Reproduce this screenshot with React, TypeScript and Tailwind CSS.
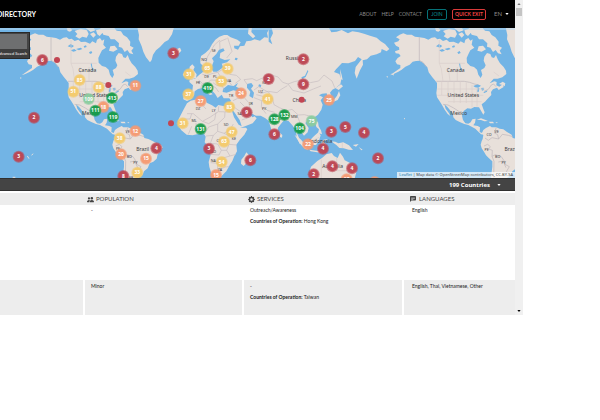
import React from "react";
import { BsChatLeftTextFill, BsGearFill, BsPeopleFill } from "react-icons/bs";

type Tone = "red" | "orange" | "yellow" | "green" | "mint";
type Marker = [x: number, y: number, label: string, tone: Tone];
type Label = [x: number, y: number, text: string];

const tones: Record<Tone, string> = {
  red: "fill-[#bd4552]",
  orange: "fill-[#f59a72]",
  yellow: "fill-[#f4ca6a]",
  green: "fill-[#159b48]",
  mint: "fill-[#8bcc9f]",
};

const markers: Marker[] = [
  [127, 180, "6", "red"], [520, 160, "3", "red"], [102, 353, "2", "red"], [56, 470, "3", "red"],
  [910, 178, "2", "red"], [806, 237, "2", "red"], [910, 253, "9", "red"], [740, 337, "9", "red"],
  [823, 403, "6", "red"], [994, 395, "3", "red"], [1036, 381, "5", "red"], [1092, 398, "4", "red"],
  [1134, 475, "2", "red"], [1056, 505, "4", "red"], [997, 499, "4", "red"], [941, 523, "2", "red"],
  [969, 446, "4", "red"], [751, 481, "6", "red"], [627, 446, "3", "red"], [469, 445, "4", "red"],
  [370, 528, "8", "red"],
  [406, 257, "11", "orange"], [310, 321, "18", "orange"], [406, 393, "12", "orange"],
  [363, 463, "20", "orange"], [438, 476, "15", "orange"], [723, 280, "24", "orange"],
  [602, 303, "27", "orange"], [987, 300, "25", "orange"], [924, 433, "22", "orange"],
  [648, 525, "15", "orange"], [1040, 538, "17", "orange"], [1124, 546, "10", "orange"],
  [239, 240, "85", "yellow"], [296, 262, "88", "yellow"], [220, 275, "51", "yellow"],
  [359, 415, "38", "yellow"], [412, 518, "33", "yellow"], [567, 223, "31", "yellow"],
  [565, 283, "37", "yellow"], [622, 204, "65", "yellow"], [683, 206, "39", "yellow"],
  [664, 244, "53", "yellow"], [688, 321, "83", "yellow"], [803, 297, "41", "yellow"],
  [548, 370, "31", "yellow"], [695, 396, "47", "yellow"], [672, 425, "63", "yellow"],
  [665, 486, "54", "yellow"],
  [266, 297, "109", "mint"], [935, 363, "75", "mint"], [336, 294, "413", "green"],
  [339, 351, "119", "green"], [286, 332, "111", "green"], [623, 264, "419", "green"],
  [602, 387, "131", "green"], [853, 345, "132", "green"], [823, 358, "128", "green"],
  [899, 385, "104", "green"],
];

const dots: [number, number][] = [[171, 180], [325, 255], [513, 370], [905, 299]];

const countryLabels: Label[] = [
  [262, 216, "Canada"], [285, 291, "United States"], [271, 346, "Mexico"], [428, 452, "Brazil"],
  [880, 179, "Russia"], [898, 306, "China"], [998, 504, "Australia"], [962, 429, "Indonesia"],
  [1367, 216, "Canada"], [1390, 291, "United States"], [1376, 346, "Mexico"], [1533, 452, "Brazil"],
];

const codeLabels: Label[] = [
  [612, 182, "NO"], [641, 157, "SE"], [620, 234, "DE"], [645, 234, "PL"], [594, 253, "FR"],
  [686, 247, "UA"], [693, 290, "TR"], [594, 331, "DZ"], [641, 335, "LY"], [582, 367, "ML"],
  [678, 379, "SD"], [753, 315, "IR"], [793, 331, "PK"], [782, 280, "UZ"], [793, 252, "KZ"],
  [640, 487, "NA"], [660, 512, "ZA"], [702, 419, "KE"], [883, 354, "MM"], [641, 459, "AO"],
  [657, 425, "CD"], [719, 344, "SA"], [388, 474, "BO"], [406, 493, "PY"], [383, 398, "VE"],
  [354, 450, "PE"], [393, 536, "AR"],
  [1467, 408, "CO"], [1490, 398, "VE"], [1460, 452, "PE"], [1493, 474, "BO"], [1511, 493, "PY"],
];

/* Outlines use map units; three units make one pixel at the usual width. */
function Americas() {
  return (
    <g>
      <g className="fill-[#e8e0da]">
        <path d="M77 128 90 124 94 118 83 112 94 104 105 100 116 104 130 104 140 110 153 112 168 114 180 119 190 113 200 112 207 118 215 116 224 123 235 119 243 126 256 125 270 131 277 124 288 130 291 119 300 114 306 122 313 118 310 134 318 143 306 151 300 163 295 174 296 188 306 198 317 201 326 209 330 224 337 234 342 224 338 210 348 204 352 196 346 182 348 170 356 159 366 162 370 172 377 174 383 165 388 178 395 190 406 201 413 212 414 222 402 232 388 236 376 236 364 250 378 244 385 246 384 256 393 260 403 253 406 261 391 270 386 263 374 268 368 276 369 285 358 296 350 305 340 313 345 327 349 337 345 344 338 332 332 322 318 321 308 326 297 325 286 333 281 347 284 360 291 370 300 371 307 367 312 358 322 356 320 368 315 376 328 378 335 382 334 396 341 399 350 397 357 399 347 404 338 403 330 395 321 386 310 380 300 375 288 372 274 366 262 360 255 352 254 344 247 333 238 322 228 313 232 326 242 340 246 348 238 342 229 329 221 315 214 304 206 292 204 279 206 263 206 249 199 240 192 232 181 217 177 202 166 190 154 182 143 183 133 185 124 194 111 200 100 209 90 215 76 222 65 226 83 213 96 204 96 195 86 193 81 184 88 174 97 168 92 161 82 160 80 154 93 149 92 142 83 137Z" />
        <path d="M341 399 345 390 353 384 365 378 370 382 384 382 394 386 405 388 416 396 430 404 433 414 445 417 456 422 469 429 483 434 488 442 483 452 473 463 470 476 460 485 449 490 443 505 432 514 428 524 413 536 368 536 370 516 372 500 372 484 362 475 353 466 347 455 340 445 337 434 340 423 343 417 345 405Z" />
        <path d="M412 82 417 105 416 118 425 139 430 155 438 172 450 187 455 180 459 164 468 151 480 141 494 126 505 120 516 103 522 82Z" />
        <path d="M200 85 209 83 217 90 210 95 203 93ZM224 93 242 86 261 91 266 102 260 113 247 110 238 116 226 109 232 102ZM256 83 280 83 286 91 272 96ZM270 102 281 97 288 105 280 113ZM288 91 302 86 309 97 299 108 292 103ZM300 83 342 83 350 92 363 94 370 105 381 112 391 125 390 137 401 143 394 152 400 163 389 160 382 150 374 156 366 143 356 140 357 130 344 118 332 118 326 108 310 104ZM331 139 344 137 353 148 340 155 327 152ZM392 252 403 245 411 250 409 259 402 255ZM325 359 338 355 350 359 359 363 348 364 338 360ZM361 365 374 365 377 370 365 370ZM381 367 388 367 386 370Z" />
      </g>
      <g className="fill-[#72b4e5]">
        <path d="M203 139 212 132 222 138 215 143ZM212 151 223 147 230 152 220 155ZM228 147 242 143 247 147 237 151ZM251 139 258 136 260 141 253 143ZM267 157 274 153 277 159 270 162ZM272 191 275 188 277 202 282 211 277 213ZM315 258 328 253 338 257 330 263 320 262ZM328 264 333 265 331 276 326 275ZM338 264 346 263 347 270 341 272ZM345 277 357 271 356 275 348 279Z" />
      </g>
      <path className="fill-none stroke-[#bdb5b9]" strokeWidth="2" d="M153 112V181L164 187 174 201M204 244H288L304 247 318 252 328 254M347 274 360 268 369 255 376 252 383 260M224 313 239 315 256 324 270 333 281 342M384 382 378 399 388 404 391 417M350 414 360 421 371 413 391 417 402 403 420 406 433 410M347 438 358 433 366 440 361 447 372 451 371 469 381 464 399 470 407 482 410 493 423 500 414 515 428 524M371 469 377 484 376 536M390 486 404 483 413 503" />
      <path className="fill-none stroke-[#dacfcc]" strokeWidth="2" d="M224 244 219 206 213 190 213 120M245 244 240 202M267 244V201M213 190H290M220 244V285M239 244V294M257 244V309M276 244V309M294 247V309M207 267H349M207 286H345M239 305H340M311 255V322M326 266V320M376 216 392 228" />
    </g>
  );
}

function OldWorld() {
  return (
    <g>
      <g className="fill-[#e8e0da]">
        <path d="M601 180 603 168 616 159 628 148 636 133 646 119 658 110 672 105 682 105 692 112 712 119 722 127 716 137 702 137 703 145 714 149 720 139 733 137 739 124 753 122 764 118 780 122 793 112 804 113 801 99 809 84 830 82 986 82 994 97 1010 95 1025 90 1044 100 1057 94 1076 97 1092 101 1110 107 1130 113 1142 124 1155 132 1168 147 1160 154 1145 147 1143 157 1130 163 1112 167 1101 178 1088 181 1089 194 1080 211 1070 236 1064 219 1067 201 1078 187 1085 178 1074 171 1065 183 1045 190 1026 189 1008 208 1002 216 1018 222 1024 238 1021 252 1007 264 997 269 990 278 997 294 991 300 983 292 980 280 966 281 957 286 969 292 962 301 968 314 964 329 954 344 940 355 924 360 916 369 926 384 923 397 912 407 902 394 895 387 892 402 901 423 907 433 899 431 890 410 887 389 877 376 865 362 852 361 842 373 834 383 832 400 825 407 817 398 812 382 806 362 795 354 782 347 768 347 751 341 743 331 735 326 744 347 760 345 770 355 758 370 735 379 714 386 706 374 698 354 688 333 687 310 693 302 688 295 671 295 665 284 653 294 645 281 637 273 627 260 614 254 625 271 638 283 630 285 617 276 607 264 594 267 584 274 582 286 574 297 561 303 550 298 551 280 555 272 577 272 579 256 568 246 569 239 585 236 598 224 612 214 617 203 607 196 601 190Z" />
        <path d="M561 310 572 302 595 297 615 294 620 308 636 316 647 323 655 315 673 319 685 319 691 333 699 352 710 369 721 383 738 383 742 388 733 404 719 420 709 434 711 454 703 468 697 483 688 497 679 514 661 532 641 536 634 520 628 501 626 486 632 464 627 442 614 427 617 410 611 400 597 401 578 406 560 404 544 391 534 375 536 357 545 340 552 326Z" />
        <path d="M746 82 756 82 754 96 766 109 759 115 744 101ZM569 200 577 193 584 201 580 210 590 223 588 234 571 239 562 233 573 227 568 215ZM553 215 563 211 565 224 555 230 548 225ZM506 153 518 144 531 147 540 143 544 152 534 163 519 168 510 163ZM739 457 747 466 742 486 731 498 723 491 724 479 733 468ZM1006 264 1023 253 1029 259 1016 270ZM1017 273 1021 286 1013 300 1001 305 990 313 986 306 1003 298 1011 287ZM1020 207 1025 225 1028 240 1022 237ZM840 399 847 405 846 413 840 411ZM884 405 902 418 919 438 924 449 914 446 899 430ZM926 425 940 410 955 397 962 406 957 422 948 435 931 435ZM968 420 983 417 973 425 980 440 973 435 969 444 964 431ZM928 449 950 452 972 456 961 458 932 454ZM945 364 954 365 956 379 963 391 966 403 954 399 957 388 949 381ZM993 424 1006 425 1015 430 1030 427 1047 436 1059 450 1046 449 1031 445 1018 444 1009 435ZM933 500 952 483 967 473 979 463 995 459 1002 468 1013 474 1020 458 1029 470 1034 481 1049 488 1061 502 1069 516 1064 536 932 536 937 523 929 514ZM1058 435 1076 432 1068 440ZM1076 441 1088 449 1084 451Z" />
      </g>
      <g className="fill-[#72b4e5]">
        <path d="M633 205 641 184 636 175 649 162 657 149 670 145 674 152 661 159 659 174 674 180 691 178 681 187 665 191 670 202 651 215 640 215ZM806 84 815 84 819 100 811 116 817 133 806 125ZM669 267 684 255 701 258 714 248 708 260 724 267 738 276 719 275 700 271 680 278 668 276ZM741 252 754 249 760 257 753 266 762 278 759 295 748 288 751 275 741 263ZM693 324 701 334 719 360 725 379 716 374 702 352ZM736 323 748 335 766 347 758 352 743 340ZM904 232 915 227 923 210 925 214 917 231 907 237ZM686 399 694 400 693 409 686 407ZM706 173 713 174 711 181 704 179ZM777 253 784 255 782 262 775 259Z" />
      </g>
      <path className="fill-none stroke-[#c6bdc0]" strokeWidth="2" d="M617 193 622 171 643 135 660 120M660 148 659 125 680 116M680 174 696 154 683 113M596 240 607 250 601 267M607 223 620 226 639 220 653 217 662 230 652 241 632 240 624 248 608 250M653 217 673 205 689 223 709 226 722 238 706 250M668 202 686 202 696 211M665 242 684 242 695 255M639 248 650 256 667 258 673 271M630 253 648 264 656 276M742 254 732 239 757 236 770 242 792 232 811 224 834 231 848 247 864 252 883 245 905 240 931 248 956 243 972 225 996 243 1004 263M864 252 878 271 912 279 940 267 963 258M781 281 805 274 831 278 842 269 862 257M762 270 776 260 793 270 809 279 797 291 769 284M699 302 713 295 733 293 746 308 750 325M720 306 733 319M762 293 785 302 784 322 798 341M785 302 802 301 817 294 822 314 838 323 861 332 876 328 895 345 913 344 936 350M861 332 865 349M893 350 900 369 914 374M824 337 801 331M703 322 717 332 738 342M725 360 753 350M561 341 580 341 607 364 631 351 655 335 656 319M656 335 691 336M604 299 608 316 618 327M544 357 570 357 575 341M575 379 565 403M588 369 588 399M608 364 626 371 644 359 648 337M614 401 626 381 653 372 674 352 675 336M653 372 653 394 672 400 690 389 700 372M618 408 640 406 653 394M640 406 631 430 653 432 664 451 680 451 687 433 710 435M629 463 657 465 664 451M680 451 690 468 708 463M632 488 654 490 665 475 690 468M654 490 652 513 675 501 687 500M672 400 690 409 709 396 706 386" />
      <path className="fill-none stroke-[#d6cbc9]" strokeWidth="2" d="M964 479V536M1010 474V512M1010 512H1060M994 502 964 502M1027 427V444M936 423 957 412" />
    </g>
  );
}

function WorldMap() {
  return (
    <svg
      viewBox="0 84 1545 450"
      preserveAspectRatio="xMaxYMin slice"
      className="block h-[150px] w-full bg-[#72b4e5] font-['Noto_Sans',sans-serif]"
      role="img"
      aria-label="World map of organizations"
    >
      <Americas />
      <OldWorld />
      <g transform="translate(1105 0)">
        <Americas />
      </g>
      <path d="M0 87H1545" className="stroke-[#b9d9f1]" strokeWidth="3" />
      <path d="M60 234h4M82 468l5 8M95 466l4-5M1175 222l7 3M1160 230l4 1M1212 355l3 2M38 532h8" className="stroke-[#e8e0da]" strokeWidth="3" />
      <g className="fill-[#3c3c42]" textAnchor="middle">
        {countryLabels.map(([x, y, text], i) => (
          <text key={i} x={x} y={y} fontSize={15}>{text}</text>
        ))}
        {codeLabels.map(([x, y, text], i) => (
          <text key={i} x={x} y={y} fontSize={11}>{text}</text>
        ))}
      </g>
      {dots.map(([x, y]) => (
        <circle key={x} cx={x} cy={y} r={9} className="fill-[#c24552]" />
      ))}
      {markers.map(([x, y, label, tone]) => (
        <g key={`${x}-${y}`} className={tones[tone]}>
          <circle cx={x} cy={y} r={18} className="opacity-60" />
          <circle cx={x} cy={y} r={15} className="opacity-90" />
          <text x={x} y={y + 5} fontSize={15} textAnchor="middle" className="fill-white font-bold">{label}</text>
        </g>
      ))}
    </svg>
  );
}

function Caret({ className }: { className: string }) {
  return (
    <svg viewBox="0 0 8 5" className={`pointer-events-none h-[2px] w-[4px] ${className}`} aria-hidden="true">
      <path d="M0 0H8L4 5Z" fill="currentColor" />
    </svg>
  );
}

function Header() {
  return (
    <header className="flex h-[28px] items-center justify-between overflow-hidden bg-black pr-[6px]">
      <a href="#home" className="-ml-[3px] text-[7px] leading-[8px] font-bold text-white">DIRECTORY</a>
      <nav className="flex items-center text-[5px] leading-[6px] text-[#8a8a8a]">
        <a href="#about" className="mr-[5px]">ABOUT</a>
        <a href="#help" className="mr-[5px]">HELP</a>
        <a href="#contact" className="mr-[5px]">CONTACT</a>
        <button className="mr-[5px] h-[11px] w-[20px] rounded-[2px] border border-[#067278] text-[#0a9096]">JOIN</button>
        <button className="mr-[8px] h-[11px] w-[34px] rounded-[2px] border border-[#d93a3a] font-bold whitespace-nowrap text-[#f04444]">QUICK EXIT</button>
        <label className="flex items-center">
          <select aria-label="Language" className="w-[11px] appearance-none text-[6px]">
            <option>EN</option>
          </select>
          <Caret className="text-white" />
        </label>
      </nav>
    </header>
  );
}

function SearchPanel() {
  return (
    <form className="absolute top-[4px] left-0 w-[30px] overflow-hidden border border-l-0 border-[#292929] bg-[#444] pt-px">
      <input aria-label="Search" className="block h-[15px] w-[27px] bg-[#6e6f70]" />
      <div className="flex h-[9px] items-center justify-end bg-[#3d3d3d] pr-[2px]">
        <a href="#advanced" className="text-[4px] leading-[5px] whitespace-nowrap text-white">Advanced Search</a>
      </div>
    </form>
  );
}

function Services({ kind, country }: { kind: string; country: string }) {
  return (
    <>
      <p>{kind}</p>
      <p className="mt-[5px]"><b className="font-bold">Countries of Operation:</b> {country}</p>
    </>
  );
}

function Listing() {
  const heading = "flex items-center gap-[2px] font-normal";
  return (
    <table className="mt-[2px] w-full table-fixed border-separate border-spacing-0 text-left text-[5px] leading-[6px] text-[#222]">
      <colgroup>
        <col className="w-[85px]" />
        <col className="w-[159px]" />
        <col className="w-[160px]" />
        <col />
      </colgroup>
      <thead className="bg-[#ededed] text-[6px] text-[#444]">
        <tr className="h-[12px]">
          <th aria-label="Organization" />
          <th className="p-0 pl-[2px]">
            <div className={heading}><BsPeopleFill className="size-[7px]" />POPULATION</div>
          </th>
          <th className="p-0 pl-[4px]">
            <div className={heading}><BsGearFill className="size-[7px]" />SERVICES</div>
          </th>
          <th className="p-0 pl-[6px]">
            <div className={heading}><BsChatLeftTextFill className="mr-px size-[6px]" />LANGUAGES</div>
          </th>
        </tr>
      </thead>
      <tbody className="align-top">
        <tr className="h-[75px]">
          <td />
          <td className="pt-[2px] pl-[6px]">-</td>
          <td className="pt-[2px] pl-[6px]"><Services kind="Outreach/Awareness" country="Hong Kong" /></td>
          <td className="pt-[2px] pl-[8px]">English</td>
        </tr>
        <tr className="h-[35px] bg-[#ededed]">
          <td className="border-r-2 border-white" />
          <td className="border-r-2 border-white pt-[3px] pl-[6px]">Minor</td>
          <td className="border-r-2 border-white pt-[3px] pl-[6px]"><Services kind="-" country="Taiwan" /></td>
          <td className="pt-[3px] pl-[8px]">English, Thai, Vietnamese, Other</td>
        </tr>
      </tbody>
    </table>
  );
}

function ScrollTrack() {
  return (
    <div className="flex w-[8px] shrink-0 flex-col items-center justify-between bg-[#f0f0f0] py-[3px] text-[#333]" aria-hidden="true">
      <div className="flex flex-col items-center gap-[3px]">
        <Caret className="rotate-180 text-[#777]" />
        <div className="h-[8px] w-[6px] bg-[#c4c4c4]" />
      </div>
      <Caret className="text-black" />
    </div>
  );
}

export default function App() {
  return (
    <div className="min-h-screen bg-white pr-[77px] font-[Lato,sans-serif]">
      <div className="flex">
        <div className="min-w-0 grow">
          <Header />
          <main>
            <section className="relative">
              <WorldMap />
              <SearchPanel />
              <p className="absolute right-0 bottom-0 bg-white/70 px-[2px] font-['Noto_Sans',sans-serif] text-[4px] leading-[6px] whitespace-nowrap text-[#444]">
                <a href="#leaflet" className="text-[#2878a8]">Leaflet</a> | Map data © <a href="#osm">OpenStreetMap</a> contributors, <a href="#license">CC-BY-SA</a>
              </p>
            </section>
            <div className="flex h-[13px] items-center justify-end border-y border-[#303030] bg-[#444] pr-[14px] text-white">
              <label className="flex items-center gap-[4px]">
                <select aria-label="Country" className="w-[44px] appearance-none font-['Open_Sans',sans-serif] text-[6px] leading-[8px] font-bold">
                  <option>199 Countries</option>
                </select>
                <Caret className="" />
              </label>
            </div>
            <Listing />
          </main>
        </div>
        <ScrollTrack />
      </div>
    </div>
  );
}
